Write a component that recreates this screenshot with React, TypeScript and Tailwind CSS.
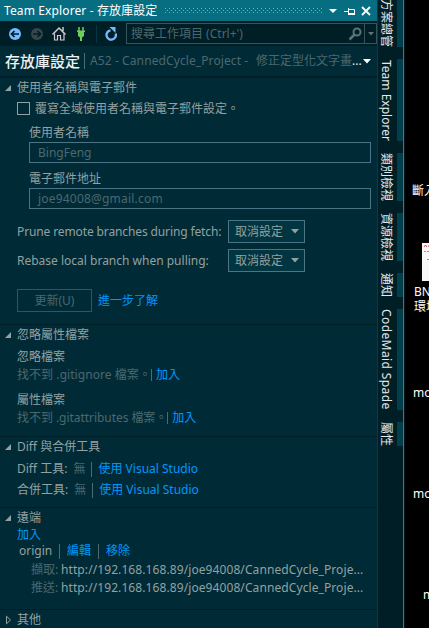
import React from "react";

const Latin = ({ className = "", children }: { className?: string; children: React.ReactNode }) => (
  <span className={`whitespace-pre ${className}`}>{children}</span>
);

const Row = ({ className = "", children }: { className?: string; children: React.ReactNode }) => (
  <div className={`flex shrink-0 items-center whitespace-nowrap ${className}`}>{children}</div>
);

const Bar = ({ className = "" }: { className?: string }) => (
  <span className={`w-px shrink-0 bg-[#4b6a72] ${className}`} />
);

const Section = ({
  title,
  open = true,
  className = "",
  children,
}: {
  title: string;
  open?: boolean;
  className?: string;
  children?: React.ReactNode;
}) => (
  <section className={`flex shrink-0 flex-col ${className}`}>
    <Row className="h-5 pl-[5px]">
      <svg width="12" height="10" viewBox="0 0 12 10" className="shrink-0">
        {open ? (
          <path d="M6 2v6h-6z" fill="#93a1a1" />
        ) : (
          <path d="M1.500 1.200v7.600L5.500 5z" fill="none" stroke="#93a1a1" />
        )}
      </svg>
      <span>{title}</span>
    </Row>
    {children}
  </section>
);

const Select = () => (
  <div className="flex h-[23px] w-[77px] items-center justify-between border border-[#4b7585] bg-[#003541] pr-[5px] pl-[6px]">
    <span>取消設定</span>
    <svg width="8" height="5" viewBox="0 0 8 5">
      <path d="M0 0h8L4 4.500z" fill="#93a1a1" />
    </svg>
  </div>
);

const Tab = ({ name, className }: { name: string; className: string }) => (
  <div className={`flex shrink-0 items-center justify-end overflow-hidden border-r-[6px] border-[#003f4b] pr-[3px] whitespace-nowrap text-[#e4e9ea] [writing-mode:vertical-rl] ${className}`}>
    <span className="[text-orientation:sideways]">{name}</span>
  </div>
);

export default function App() {
  return (
    <div className="flex h-[628px] w-[429px] overflow-hidden bg-black font-['Noto_Sans','Noto_Sans_CJK_TC',sans-serif] text-[12px] leading-[16px] text-[#93a1a1]">
      <main className="flex w-[378px] shrink-0 flex-col border-r border-[#003e4b] bg-[#002b36]">
        <header className="flex h-[21px] shrink-0 items-center bg-[#076e82] pl-[4px] text-white">
          <span className="w-[161px] shrink-0 whitespace-nowrap tracking-[0.120px]">Team Explorer - 存放庫設定</span>
          <svg width="157" height="5" viewBox="0 0 157 5" className="shrink-0">
            <defs>
              <pattern id="grip" width="4" height="4" patternUnits="userSpaceOnUse">
                <path d="M0 0h1v1H0zM2 2h1v1H2z" fill="#52bad0" />
              </pattern>
            </defs>
            <rect width="157" height="5" fill="url(#grip)" />
          </svg>
          <svg width="50" height="12" viewBox="0 0 50 12" className="ml-[5px] shrink-0" fill="none" stroke="#fff">
            <path d="M2 4h8L6 8z" fill="#fff" stroke="none" />
            <path d="M17 6.500h4.500M21.500 3v7M22 4.500h5.500v4" />
            <path d="M22 8h6v2h-6z" fill="#fff" stroke="none" />
            <path d="M35 2l8 8M43 2l-8 8" strokeWidth="1.800" />
          </svg>
        </header>

        <div className="flex h-[25px] shrink-0 items-center bg-[#001e26]">
          <svg width="126" height="25" viewBox="0 0 126 25" className="shrink-0" fill="none">
            <circle cx="15" cy="13" r="6" fill="#75b9ff" />
            <path d="M19 13h-7M14.500 10l-3 3 3 3" stroke="#001e26" strokeWidth="1.700" />
            <circle cx="37" cy="13" r="6" fill="#38464c" />
            <path d="M33 13h7M37.500 10l3 3-3 3" stroke="#001e26" strokeWidth="1.700" />
            <path d="M54 13l5-5 5 5v6.500H54z" fill="#081a2c" />
            <path d="M54.500 12.500v6.500h3v-4.500h3v4.500h3.500v-6.500" stroke="#ccc" strokeWidth="1.200" />
            <path d="M52.500 13.500L59 7l6.500 6.500M63 6v4" stroke="#ccc" strokeWidth="1.500" />
            <path d="M79 6v4M83 6v4" stroke="#6dce5c" strokeWidth="1.500" />
            <path d="M77 9.500h8v1.500h-1v4l-2 1.500v3.500h-2v-3.500L78 15v-4h-1z" fill="#6dce5c" />
            <path d="M96.500 4v18" stroke="#073642" />
            <path d="M110.500 9.300A4.700 4.700 0 1 0 115.700 12.500" stroke="#75b9ff" strokeWidth="2.300" />
            <path d="M109.500 6h6v6z" fill="#75b9ff" />
          </svg>
          <div className="flex h-[21px] w-[251px] items-center border border-[#35545b] bg-[#001e26] pl-[4px] text-[#4b6870]">
            <span className="flex-1 whitespace-nowrap">搜尋工作項目 (Ctrl+')</span>
            <svg width="14" height="14" viewBox="0 0 14 14" fill="none" stroke="#5a7278" className="mr-[2px] shrink-0">
              <circle cx="9" cy="5" r="3.500" strokeWidth="2" />
              <path d="M6.500 7.500L1.500 12.500" strokeWidth="2.500" />
            </svg>
            <div className="flex h-[19px] w-[12px] shrink-0 items-center justify-center border-l border-[#35545b]">
              <svg width="6" height="4" viewBox="0 0 6 4"><path d="M0 0h6L3 3.500z" fill="#5a7278" /></svg>
            </div>
          </div>
        </div>

        <div className="flex h-[32px] shrink-0 items-center border-b-2 border-[#001e26] pl-[5px] whitespace-nowrap">
          <span className="w-[79px] shrink-0 text-[15px] font-medium text-[#eef2f3]">存放庫設定</span>
          <Bar className="h-4" />
          <span className="ml-[5px] w-[166px] shrink-0 tracking-[0.100px] text-[#4b6870]">A52 - CannedCycle_Project -</span>
          <span className="text-[#4b6870]">修正定型化文字畫</span>
          <span className="text-[#e4e9ea]">...</span>
          <svg width="8" height="5" viewBox="0 0 8 5" className="ml-px"><path d="M0 0h8L4 4.500z" fill="#fff" /></svg>
        </div>

        <Section title="使用者名稱與電子郵件" className="h-[246px]">
          <Row className="h-[21px] pl-[17px]">
            <span className="mr-[5px] size-[13px] border border-[#93a1a1]" />
            <span>覆寫全域使用者名稱與電子郵件設定。</span>
          </Row>
          <Row className="mt-[5px] h-[18px] pl-[29px]">使用者名稱</Row>
          <div className="ml-[29px] flex h-[21px] w-[342px] shrink-0 items-center border border-[#4b7585] pl-[8px] text-[#4b6870]">BingFeng</div>
          <Row className="mt-[7px] h-[18px] pl-[29px]">電子郵件地址</Row>
          <div className="ml-[29px] flex h-[21px] w-[342px] shrink-0 items-center border border-[#4b7585] pl-[8px] tracking-[0.200px] text-[#4b6870]">joe94008@gmail.com</div>
          <Row className="mt-[11px] h-[23px] pl-[17px]">
            <span className="w-[211px] tracking-[-0.120px]">Prune remote branches during fetch:</span>
            <Select />
          </Row>
          <Row className="mt-[6px] h-[23px] pl-[17px]">
            <span className="w-[211px]">Rebase local branch when pulling:</span>
            <Select />
          </Row>
          <Row className="mt-[17px] h-[23px] pl-[17px]">
            <span className="mr-[6px] flex h-[23px] w-[75px] items-center justify-center border border-[#35545b] text-[#4b6870]">更新(U)</span>
            <span className="text-[#0097fb]">進一步了解</span>
          </Row>
        </Section>

        <Section title="忽略屬性檔案" className="h-[112px] border-t border-[#001e26]">
          <Row className="mt-[3px] h-[18px] pl-[17px]">忽略檔案</Row>
          <Row className="h-[17px] pl-[17px]">
            <Latin className="tracking-[0.060px] text-[#4b6870]">找不到 .gitignore 檔案。</Latin>
            <Bar className="mr-[4px] h-3" />
            <span className="text-[#0097fb]">加入</span>
          </Row>
          <Row className="mt-[8px] h-[18px] pl-[17px]">屬性檔案</Row>
          <Row className="h-[17px] pl-[17px]">
            <Latin className="tracking-[-0.050px] text-[#4b6870]">找不到 .gitattributes 檔案。</Latin>
            <Bar className="mr-[4px] h-3" />
            <span className="text-[#0097fb]">加入</span>
          </Row>
        </Section>

        <Section title="Diff 與合併工具" className="h-[71px] border-t border-[#001e26]">
          <Row className="mt-[1px] h-[22px] pl-[17px]">
            <span>Diff 工具:</span>
            <span className="ml-[6px] text-[#4b6870]">無</span>
            <Bar className="mr-[6px] ml-[6px] h-[15px]" />
            <span className="text-[#0097fb]">使用 Visual Studio</span>
          </Row>
          <Row className="h-[20px] pl-[17px]">
            <span>合併工具:</span>
            <span className="ml-[6px] text-[#4b6870]">無</span>
            <Bar className="mr-[6px] ml-[6px] h-[15px]" />
            <span className="text-[#0097fb]">使用 Visual Studio</span>
          </Row>
        </Section>

        <Section title="遠端" className="h-[102px] border-t border-[#001e26]">
          <Row className="h-[13px] pl-[17px] text-[#0097fb]">加入</Row>
          <Row className="h-[20px] pl-[19px]">
            <span className="w-[40px]">origin</span>
            <Bar className="mr-[7px] h-[15px]" />
            <span className="text-[#0097fb]">編輯</span>
            <Bar className="mx-[7px] h-[15px]" />
            <span className="text-[#0097fb]">移除</span>
          </Row>
          <Row className="h-[18px] pl-[31px]">
            <span className="w-[30px] text-[#4b6870]">擷取:</span>
            <span className="tracking-[0.090px]">http://192.168.168.89/joe94008/CannedCycle_Proje...</span>
          </Row>
          <Row className="h-[18px] pl-[31px]">
            <span className="w-[30px] text-[#4b6870]">推送:</span>
            <span className="tracking-[0.090px]">http://192.168.168.89/joe94008/CannedCycle_Proje...</span>
          </Row>
        </Section>

        <Section title="其他" open={false} className="h-[19px] border-t border-[#001e26]" />
      </main>

      <aside className="flex w-[26px] shrink-0 flex-col gap-3 border-r border-[#4b7585] bg-[#001e26]">
        <Tab name="方案總管" className="h-[47px]" />
        <Tab name="Team Explorer" className="h-[82px]" />
        <Tab name="類別檢視" className="h-[48px]" />
        <Tab name="資源檢視" className="h-[48px]" />
        <Tab name="通知" className="h-[24px]" />
        <Tab name="CodeMaid Spade" className="h-[101px] tracking-[0.400px]" />
        <Tab name="屬性" className="h-[24px]" />
      </aside>

      <div className="relative flex-1 overflow-hidden bg-gradient-to-r from-[#0c1c22] to-black to-[3px] whitespace-nowrap text-white">
        <span className="absolute top-[183px] left-[8px]">斷入</span>
        <svg className="absolute top-[243px] left-[18px]" width="12" height="38" viewBox="0 0 12 38">
          <path d="M0 0h12v38H0z" fill="#f7f7f7" />
          <path d="M2 4l1.500-2L5 4M6 3h3" stroke="#d0505c" fill="none" />
          <path d="M2 8.500h6M5 16.500h4" stroke="#999" strokeDasharray="2 1" />
        </svg>
        <div className="absolute top-[284px] left-[10px] leading-[15px]">
          <div>BN</div>
          <div>環境</div>
        </div>
        <span className="absolute top-[385px] left-[9px]">mo</span>
        <span className="absolute top-[486px] left-[9px]">mo</span>
        <span className="absolute top-[587px] left-[19px]">m</span>
      </div>
    </div>
  );
}
